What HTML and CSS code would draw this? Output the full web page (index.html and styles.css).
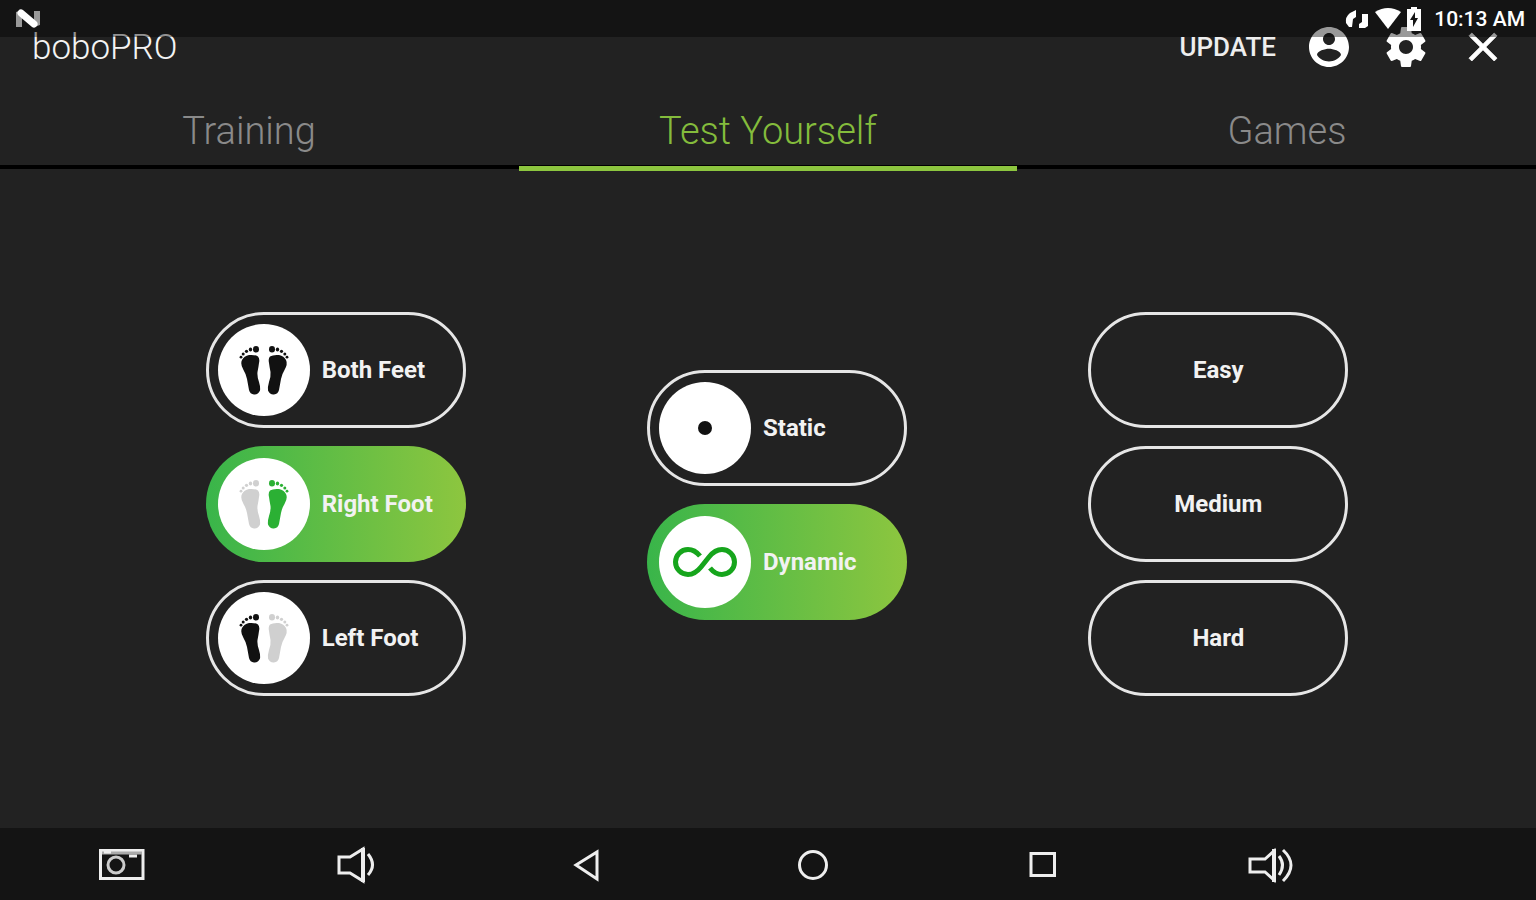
FILE: index.html
```html
<!DOCTYPE html>
<html lang="en">
<head>
<meta charset="UTF-8">
<meta name="viewport" content="width=device-width, initial-scale=1.0">
<title>boboPRO</title>
<link rel="stylesheet" href="styles.css">
</head>
<body>

<!-- shared foot shapes -->
<svg class="defs" aria-hidden="true">
  <defs>
    <g id="foot">
      <path d="M-22 -10Q-20 -14 -15 -15Q-9 -15.500 -6 -13.500Q-4 -11 -5 -7Q-5.500 -3 -6.500 2Q-7 6 -5 12Q-3.500 17 -4 20.500Q-6 25 -10 24.500Q-14 24 -15 20L-17 9Q-18 4 -20.500 0Q-24 -6 -22 -10Z"/>
      <ellipse cx="-8" cy="-20.700" rx="3" ry="3.200"/>
      <ellipse cx="-13.500" cy="-20.500" rx="1.700" ry="1.900"/>
      <circle cx="-17.500" cy="-18.700" r="1.600"/>
      <circle cx="-20.800" cy="-16" r="1.500"/>
      <circle cx="-23" cy="-12.800" r="1.400"/>
    </g>
  </defs>
</svg>

<div class="status-bar">
  <svg class="status-logo" viewBox="0 0 26 20" width="26" height="20" aria-hidden="true">
    <path d="M1 3L7 1V18H1ZM19 2H25V16L19 18Z" fill="#999"/>
    <path d="M6 4L19 15" stroke="#fff" stroke-width="7" stroke-linecap="round"/>
  </svg>
  <div class="status-icons">
    <svg viewBox="0 0 26 24" width="26" height="24" aria-hidden="true">
      <path d="M12 3L6 6Q1 10 2 16L5 20H8L9 12L12 10ZM18 7H24V19L21 21H15V17L18 15Z" fill="#fff"/>
    </svg>
    <svg viewBox="0 0 28 24" width="28" height="24" aria-hidden="true">
      <path d="M1 5Q14 -3 27 5L14 22Z" fill="#fff"/>
    </svg>
    <svg viewBox="0 0 16 24" width="16" height="24" aria-hidden="true">
      <path fill-rule="evenodd" d="M5 0H11V2H15V24H1V2H5ZM9 5L4 13H7V20L12 11H9Z" fill="#fff"/>
    </svg>
    <span class="clock">10:13 AM</span>
  </div>
</div>

<header class="toolbar">
  <h1>boboPRO</h1>
  <div class="actions">
    <button type="button" class="update">UPDATE</button>
    <button type="button" class="icon-button" aria-label="Account">
      <svg viewBox="0 0 24 24" width="48" height="48"><path d="M12 2C6.480 2 2 6.480 2 12s4.480 10 10 10 10-4.480 10-10S17.520 2 12 2zm0 3c1.660 0 3 1.340 3 3s-1.340 3-3 3-3-1.340-3-3 1.340-3 3-3zm0 14.200c-2.500 0-4.710-1.280-6-3.220.03-1.990 4-3.080 6-3.080 1.990 0 5.970 1.090 6 3.080-1.290 1.940-3.500 3.220-6 3.220z"/></svg>
    </button>
    <button type="button" class="icon-button" aria-label="Settings">
      <svg viewBox="0 0 24 24" width="48" height="48"><path d="M19.430 12.980c.04-.32.07-.64.07-.98s-.03-.66-.07-.98l2.110-1.650c.19-.15.24-.42.12-.64l-2-3.460c-.12-.22-.39-.3-.61-.22l-2.490 1c-.52-.4-1.080-.73-1.690-.98l-.38-2.650C14.460 2.180 14.250 2 14 2h-4c-.25 0-.46.18-.49.42l-.38 2.650c-.61.25-1.170.59-1.690.98l-2.490-1c-.23-.09-.49 0-.61.22l-2 3.460c-.13.22-.07.49.12.64l2.110 1.650c-.04.32-.07.65-.07.98s.03.66.07.98l-2.110 1.650c-.19.15-.24.42-.12.64l2 3.460c.12.22.39.3.61.22l2.490-1c.52.4 1.080.73 1.690.98l.38 2.650c.03.24.24.42.49.42h4c.25 0 .46-.18.49-.42l.38-2.650c.61-.25 1.170-.59 1.690-.98l2.490 1c.23.09.49 0 .61-.22l2-3.460c.12-.22.07-.49-.12-.64l-2.110-1.650zM12 15.500c-1.930 0-3.500-1.570-3.500-3.500s1.570-3.500 3.500-3.500 3.500 1.570 3.500 3.500-1.570 3.500-3.500 3.500z"/></svg>
    </button>
    <button type="button" class="icon-button" aria-label="Close">
      <svg viewBox="0 0 24 24" width="48" height="48"><path d="M19 6.410L17.590 5 12 10.590 6.410 5 5 6.410 10.590 12 5 17.590 6.410 19 12 13.410 17.590 19 19 17.590 13.410 12z" stroke="#fff" stroke-width=".4"/></svg>
    </button>
  </div>
</header>

<nav class="tabs">
  <a href="#training">Training</a>
  <a href="#test" class="active">Test Yourself</a>
  <a href="#games">Games</a>
</nav>

<main class="options">
  <div class="column" role="radiogroup" aria-label="Feet">
    <label class="pill">
      <input type="radio" name="feet">
      <svg class="badge" viewBox="-46 -46 92 92" aria-hidden="true">
        <use href="#foot" class="on"/>
        <use href="#foot" class="on" transform="scale(-1 1)"/>
      </svg>
      <span>Both Feet</span>
    </label>
    <label class="pill">
      <input type="radio" name="feet" checked>
      <svg class="badge" viewBox="-46 -46 92 92" aria-hidden="true">
        <use href="#foot" class="off"/>
        <use href="#foot" class="on" transform="scale(-1 1)"/>
      </svg>
      <span>Right Foot</span>
    </label>
    <label class="pill">
      <input type="radio" name="feet">
      <svg class="badge" viewBox="-46 -46 92 92" aria-hidden="true">
        <use href="#foot" class="on"/>
        <use href="#foot" class="off" transform="scale(-1 1)"/>
      </svg>
      <span>Left Foot</span>
    </label>
  </div>

  <div class="column mode" role="radiogroup" aria-label="Mode">
    <label class="pill">
      <input type="radio" name="mode">
      <svg class="badge" viewBox="-46 -46 92 92" aria-hidden="true">
        <circle r="7" class="on"/>
      </svg>
      <span>Static</span>
    </label>
    <label class="pill">
      <input type="radio" name="mode" checked>
      <svg class="badge" viewBox="-46 -46 92 92" aria-hidden="true">
        <path class="loop" d="M-5 -6C-9 -11 -13 -12.500 -17 -12.500A12.500 12.500 0 0 0 -17 12.500C-12 12.500 -8 10 -4 5L4 -5C8 -10 12 -12.500 17 -12.500A12.500 12.500 0 0 1 17 12.500C13 12.500 9 11 5 6"/>
      </svg>
      <span>Dynamic</span>
    </label>
  </div>

  <div class="column" role="radiogroup" aria-label="Difficulty">
    <label class="pill plain"><input type="radio" name="level"><span>Easy</span></label>
    <label class="pill plain"><input type="radio" name="level"><span>Medium</span></label>
    <label class="pill plain"><input type="radio" name="level"><span>Hard</span></label>
  </div>
</main>

<footer class="nav-bar">
  <button type="button" aria-label="Screenshot">
    <svg viewBox="-24 -24 48 48" width="48" height="48">
      <path d="M-21.500 -13.500H21V14.500H-21.500Z"/>
      <path d="M-20 -11H20" stroke="#aaa" stroke-width="3"/>
      <path d="M-18 -12H-11M7 -8H15" stroke-width="3"/>
      <circle cx="-6" cy="1" r="8" stroke="#ccc"/>
    </svg>
  </button>
  <button type="button" aria-label="Volume down">
    <svg viewBox="-24 -24 48 48" width="48" height="48">
      <path d="M-12 -7H-1L12 -15V17L-1 9H-12Z"/>
      <path d="M12 -16V18" stroke-width="4"/>
      <path d="M17 -10Q26 1 17 11"/>
    </svg>
  </button>
  <button type="button" aria-label="Back">
    <svg viewBox="-24 -24 48 48" width="48" height="48"><path d="M-5 1L16 -12V15Z"/></svg>
  </button>
  <button type="button" aria-label="Home">
    <svg viewBox="-24 -24 48 48" width="48" height="48"><circle cx="2" cy="1" r="13.500"/></svg>
  </button>
  <button type="button" aria-label="Recent apps">
    <svg viewBox="-24 -24 48 48" width="48" height="48"><path d="M-9 -10.500H14.500V11.500H-9Z"/></svg>
  </button>
  <button type="button" aria-label="Volume up">
    <svg viewBox="-24 -24 48 48" width="48" height="48">
      <path d="M-20 -5H-5L4 -13V16L-5 8H-20Z"/>
      <path d="M4 -15V18" stroke-width="4"/>
      <path d="M9 -8Q16 1 9 11M13 -14Q29 1 13 17"/>
    </svg>
  </button>
</footer>

</body>
</html>
```
FILE: styles.css
```css
* {
    box-sizing: border-box;
}

body {
    margin: 0;
    min-height: 100vh;
    display: flex;
    flex-direction: column;
    background-color: #222222;
    color: #ffffff;
    font-family: Roboto, "Open Sans", sans-serif;
}

svg {
    display: block;
}

button {
    background: none;
    border: none;
    padding: 0;
    color: inherit;
    font-family: inherit;
    cursor: pointer;
}

.defs {
    position: absolute;
    width: 0;
    height: 0;
}

/* translucent system bar lies over the toolbar */
.status-bar {
    position: absolute;
    top: 0;
    left: 0;
    right: 0;
    height: 37px;
    padding: 0 11px 0 15px;
    display: flex;
    justify-content: space-between;
    align-items: center;
    background-color: rgba(0, 0, 0, 0.4);
    pointer-events: none;
}

.status-icons {
    display: flex;
    align-items: center;
    gap: 4px;
}

.clock {
    margin-left: 8px;
    font-size: 21px;
    font-weight: 500;
}

.toolbar {
    height: 94px;
    padding: 0 29px 0 32px;
    display: flex;
    justify-content: space-between;
    align-items: center;
}

.toolbar h1 {
    margin: 0;
    font-size: 35px;
    font-weight: 300;
    color: #f4f4f4;
}

.actions {
    display: flex;
    align-items: center;
    gap: 29px;
}

.update {
    font-size: 26px;
    font-weight: 500;
    color: #eeeeee;
}

.icon-button svg {
    fill: #ffffff;
}

.tabs {
    height: 77px;
    display: grid;
    grid-template-columns: repeat(3, 1fr);
    gap: 21px;
    background: linear-gradient(#000000, #000000) 0 71px / 100% 4px no-repeat;
}

.tabs a {
    padding-top: 2px;
    display: flex;
    justify-content: center;
    align-items: center;
    border-bottom: 5px solid transparent;
    color: #8a8a8a;
    font-size: 38px;
    font-weight: 300;
    text-decoration: none;
}

.tabs .active {
    color: #84bc3c;
    border-bottom-color: #8dc63f;
}

.options {
    flex: 1;
    padding: 9px 97px 0 115px;
    display: grid;
    grid-template-columns: repeat(3, 1fr);
    align-items: center;
}

.column {
    display: flex;
    flex-direction: column;
    align-items: center;
    gap: 18px;
}

.mode {
    padding-bottom: 18px;
}

.pill {
    position: relative;
    width: 260px;
    height: 116px;
    padding-left: 9px;
    display: flex;
    align-items: center;
    gap: 12px;
    border: 3px solid #e6e6e6;
    border-radius: 58px;
    font-size: 24px;
    font-weight: 700;
    color: #f2f2f2;
    cursor: pointer;
}

.pill input {
    position: absolute;
    opacity: 0;
}

.pill:has(input:checked) {
    border: none;
    padding-left: 12px;
    background: linear-gradient(to right, #39b54a, #8dc63f);
}

.plain {
    padding-left: 0;
    justify-content: center;
}

.badge {
    width: 92px;
    height: 92px;
    border-radius: 50%;
    background-color: #ffffff;
}

.on {
    fill: #111111;
}

.off {
    fill: #d0d0d0;
}

input:checked + .badge .on {
    fill: #2bb034;
}

.loop {
    fill: none;
    stroke: #16a51c;
    stroke-width: 5;
}

.nav-bar {
    height: 72px;
    padding: 0 151px 0 7px;
    display: grid;
    grid-template-columns: repeat(6, 1fr);
    background-color: #141414;
}

.nav-bar button {
    display: flex;
    justify-content: center;
    align-items: center;
}

.nav-bar svg {
    fill: none;
    stroke: #eeeeee;
    stroke-width: 3;
}
```
